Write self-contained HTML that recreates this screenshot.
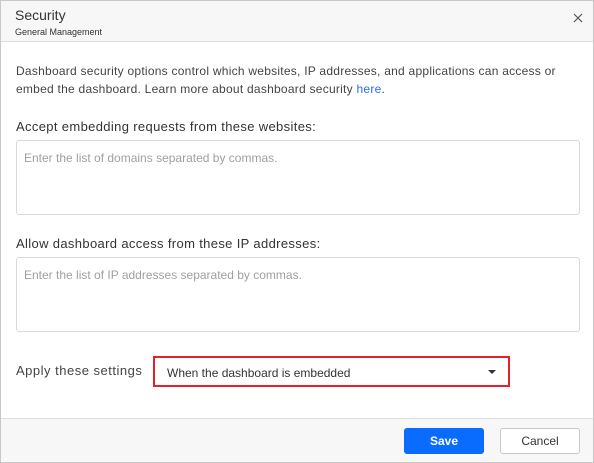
<!DOCTYPE html>
<html><head><style>
*{box-sizing:border-box;margin:0;padding:0}
body{width:594px;height:463px;background:#fff;font-family:"Liberation Sans",sans-serif;position:relative;overflow:hidden}
.frame{position:absolute;left:0;top:0;width:594px;height:463px;border:1px solid #c8c8c8}
.hdr{position:absolute;left:1px;top:1px;width:592px;height:41px;background:#f7f7f7;border-bottom:1px solid #e0e0e0}
.t{position:absolute;left:14px;top:6px;font-size:14px;color:#333}
.st{position:absolute;left:14px;top:26px;font-size:9px;color:#333}
.x{position:absolute;left:572px;top:12px;}
.p{position:absolute;left:16px;top:62px;font-size:12px;line-height:18px;color:#444;white-space:nowrap;letter-spacing:0.25px}
.p a{color:#2a6cf5;text-decoration:none}
.lbl{position:absolute;left:16px;font-size:13px;color:#333;letter-spacing:0.35px}
.ta{position:absolute;left:16px;width:564px;height:75px;border:1px solid #d9d9d9;border-radius:3px;padding:10px 7px;font-size:12px;color:#a0a0a0}
.ap{position:absolute;left:16px;top:363px;font-size:13px;color:#444;letter-spacing:0.5px}
.dd{position:absolute;left:153px;top:356px;width:357px;height:31px;border:2px solid #e3212b;font-size:12px;color:#333;padding:8px 12px}
.dd:after{content:"";position:absolute;right:12px;top:12px;border-left:4px solid transparent;border-right:4px solid transparent;border-top:4px solid #333}
.ft{position:absolute;left:1px;top:418px;width:592px;height:44px;background:#f7f7f7;border-top:1px solid #e0e0e0}
.b{position:absolute;top:428px;width:80px;height:26px;border-radius:3px;font-size:12px;text-align:center;line-height:26px}
</style></head><body>
<div class="hdr"><div class="t">Security</div><div class="st">General Management</div>
<svg class="x" width="10" height="10" viewBox="0 0 10 10"><path d="M1 1L9 9M9 1L1 9" stroke="#555" stroke-width="1.2"/></svg></div>
<div class="p">Dashboard security options control which websites, IP addresses, and applications can access or<br>embed the dashboard. Learn more about dashboard security <a>here</a>.</div>
<div class="lbl" style="top:119px">Accept embedding requests from these websites:</div>
<div class="ta" style="top:140px">Enter the list of domains separated by commas.</div>
<div class="lbl" style="top:236px">Allow dashboard access from these IP addresses:</div>
<div class="ta" style="top:257px">Enter the list of IP addresses separated by commas.</div>
<div class="ap">Apply these settings</div>
<div class="dd">When the dashboard is embedded</div>
<div class="ft"></div>
<div class="b" style="left:404px;background:#0a6cff;color:#fff;font-weight:bold">Save</div>
<div class="b" style="left:500px;background:#fff;border:1px solid #c8c8c8;color:#333;line-height:24px">Cancel</div>
<div class="frame"></div>
</body></html>
